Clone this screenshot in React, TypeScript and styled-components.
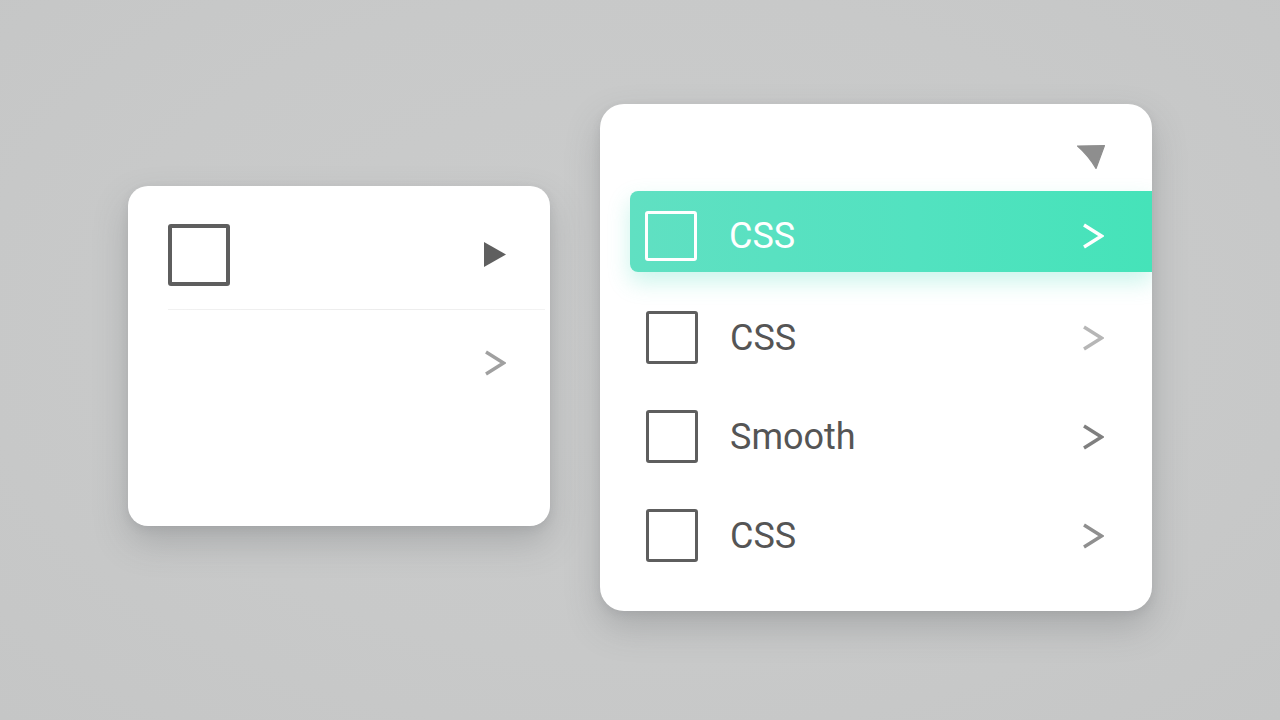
import React from "react";
import styled, { createGlobalStyle } from "styled-components";

const Global = createGlobalStyle`
  html, body { margin: 0; padding: 0; }
  body {
    width: 1280px;
    height: 720px;
    overflow: hidden;
    background: #c9caca;
    font-family: Roboto, "Noto Sans", "Liberation Sans", sans-serif;
  }
`;

const Stage = styled.div`
  width: 1280px;
  height: 720px;
  box-sizing: border-box;
  padding-left: 128px;
  display: flex;
  align-items: center;
  gap: 50px;
  background: radial-gradient(ellipse at 50% 45%, #cbcccc 0%, #c8c9c9 60%, #c5c6c6 100%);
`;

const Card = styled.div<{ $w: number; $h: number; $lift: number; $radius: number }>`
  width: ${(p) => p.$w}px;
  height: ${(p) => p.$h}px;
  margin-bottom: ${(p) => p.$lift}px;
  border-radius: ${(p) => p.$radius}px;
  background: #ffffff;
  box-shadow: 0 16px 34px rgba(90, 92, 96, 0.28), 0 3px 8px rgba(90, 92, 96, 0.12);
  overflow: hidden;
  display: flex;
  flex-direction: column;
  box-sizing: border-box;
`;

const MiniRow = styled.div<{ $h: number; $top: number }>`
  height: ${(p) => p.$h}px;
  box-sizing: border-box;
  padding: ${(p) => p.$top}px 44px 0 40px;
  display: flex;
  align-items: center;
  justify-content: space-between;
`;

const Divider = styled.div`
  height: 1px;
  margin: 0 5px 0 40px;
  background: linear-gradient(90deg, #f1f1f1, #ececec 60%, #f3f3f3);
`;

const Box = styled.span<{ $w: number; $h: number; $b: number; $color: string }>`
  width: ${(p) => p.$w}px;
  height: ${(p) => p.$h}px;
  box-sizing: border-box;
  border: ${(p) => p.$b}px solid ${(p) => p.$color};
  border-radius: 3px;
  flex: none;
`;

const Header = styled.div`
  height: 87px;
  box-sizing: border-box;
  padding: 40px 46px 0 0;
  display: flex;
  justify-content: flex-end;
  align-items: flex-start;
`;

const Row = styled.div<{ $active?: boolean }>`
  height: ${(p) => (p.$active ? 81 : 99)}px;
  box-sizing: border-box;
  display: flex;
  align-items: center;
  gap: 32px;
  margin: ${(p) => (p.$active ? "0 0 16px 30px" : "0")};
  padding: ${(p) => (p.$active ? "8px 48px 0 15px" : "0 48px 0 46px")};
  border-radius: ${(p) => (p.$active ? "8px 0 0 8px" : "0")};
  background: ${(p) =>
    p.$active ? "linear-gradient(90deg, #60e0c2 0%, #52e2c0 55%, #45e3b9 100%)" : "transparent"};
  box-shadow: ${(p) => (p.$active ? "0 10px 22px rgba(70, 220, 185, 0.28)" : "none")};
`;

const Label = styled.span<{ $active?: boolean }>`
  flex: 1;
  font-size: 36px;
  line-height: 1;
  color: ${(p) => (p.$active ? "#ffffff" : "#555555")};
`;

const List = styled.div`
  display: flex;
  flex-direction: column;
`;

const Chevron = ({ color }: { color: string }) => (
  <svg width="22" height="26" viewBox="0 0 22 26" style={{ flex: "none" }}>
    <polyline points="2,2 19.5,13 2,24" fill="none" stroke={color} strokeWidth="3.4" strokeLinejoin="miter" />
  </svg>
);

const Play = () => (
  <svg width="22" height="25" viewBox="0 0 22 25">
    <polygon points="0,0 22,12.5 0,25" fill="#5f5f5f" />
  </svg>
);

// Down-pointing dropdown marker, almost a plain triangle
const Pointer = () => (
  <svg width="30" height="26" viewBox="0 0 30 26">
    <path
      d="M1.5 2 L28.5 1.5 L20 24.5 Q12.5 11.5 1.5 2 Z"
      fill="#8e8e8e"
      stroke="#8e8e8e"
      strokeWidth="1.2"
      strokeLinejoin="round"
    />
  </svg>
);

type Item = { label: string; chevron: string; active?: boolean };

const items: Item[] = [
  { label: "CSS", chevron: "#ffffff", active: true },
  { label: "CSS", chevron: "#b6b6b6" },
  { label: "Smooth", chevron: "#7f7f7f" },
  { label: "CSS", chevron: "#8f8f8f" },
];

export default function App() {
  return (
    <>
      <Global />
      <Stage>
        <Card $w={422} $h={340} $lift={8} $radius={20}>
          <MiniRow $h={123} $top={14}>
            <Box $w={62} $h={62} $b={4} $color="#5e5e5e" />
            <Play />
          </MiniRow>
          <Divider />
          <MiniRow $h={106} $top={0}>
            <span />
            <Chevron color="#a0a0a0" />
          </MiniRow>
        </Card>
        <Card $w={552} $h={507} $lift={5} $radius={24}>
          <Header>
            <Pointer />
          </Header>
          <List>
            {items.map((it, i) => (
              <Row key={i} $active={it.active}>
                <Box
                  $w={52}
                  $h={it.active ? 50 : 53}
                  $b={it.active ? 3 : 3.5}
                  $color={it.active ? "#ffffff" : "#5e5e5e"}
                />
                <Label $active={it.active}>{it.label}</Label>
                <Chevron color={it.chevron} />
              </Row>
            ))}
          </List>
        </Card>
      </Stage>
    </>
  );
}
